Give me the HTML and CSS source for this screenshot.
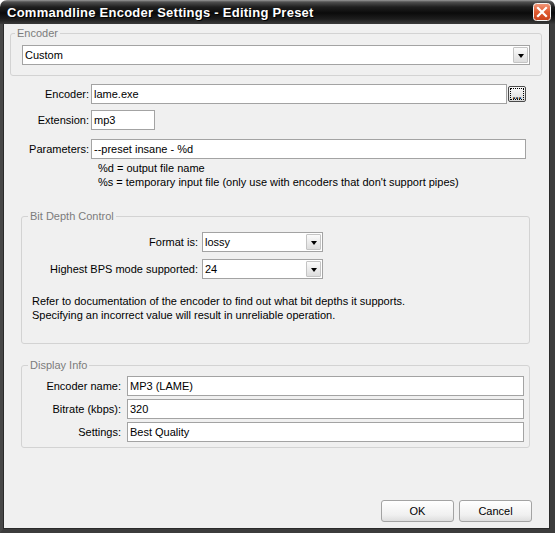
FILE: index.html
```html
<!DOCTYPE html>
<html>
<head>
<meta charset="utf-8">
<link rel="stylesheet" href="styles.css">
</head>
<body>
<div class="window">
  <div class="titlebar">
    <span class="title">Commandline Encoder Settings - Editing Preset</span>
    <span class="close">
      <svg width="18" height="18" viewBox="0 0 18 18">
        <defs>
          <linearGradient id="cg" x1="0" y1="0" x2="0" y2="1">
            <stop offset="0" stop-color="#f39a7c"/>
            <stop offset="0.5" stop-color="#e05a30"/>
            <stop offset="1" stop-color="#c9421c"/>
          </linearGradient>
        </defs>
        <rect x="0.5" y="0.5" width="17" height="17" rx="3" fill="url(#cg)" stroke="#f4f4f4"/>
        <path d="M5 5 L13 13 M13 5 L5 13" stroke="#fff" stroke-width="2.2" stroke-linecap="square"/>
      </svg>
    </span>
  </div>
  <div class="client">
    <fieldset class="group group-encoder">
      <legend>Encoder</legend>
      <div class="combo"><span class="value">Custom</span><span class="arrow"></span></div>
    </fieldset>

    <div class="form">
      <div class="row">
        <span class="label">Encoder:</span>
        <div class="field grow">lame.exe</div>
        <div class="browse"><span>...</span></div>
      </div>
      <div class="row row-ext">
        <span class="label">Extension:</span>
        <div class="field ext">mp3</div>
      </div>
      <div class="row row-params">
        <span class="label">Parameters:</span>
        <div class="field grow">--preset insane - %d</div>
      </div>
      <div class="hints">
        <div>%d = output file name</div>
        <div>%s = temporary input file (only use with encoders that don't support pipes)</div>
      </div>
    </div>

    <fieldset class="group group-bit">
      <legend>Bit Depth Control</legend>
      <div class="brow">
        <span class="label">Format is:</span>
        <div class="combo small"><span class="value">lossy</span><span class="arrow"></span></div>
      </div>
      <div class="brow brow-2">
        <span class="label">Highest BPS mode supported:</span>
        <div class="combo small"><span class="value">24</span><span class="arrow"></span></div>
      </div>
      <div class="note">
        <div>Refer to documentation of the encoder to find out what bit depths it supports.</div>
        <div>Specifying an incorrect value will result in unreliable operation.</div>
      </div>
    </fieldset>

    <fieldset class="group group-display">
      <legend>Display Info</legend>
      <div class="drow">
        <span class="label">Encoder name:</span>
        <div class="field grow">MP3 (LAME)</div>
      </div>
      <div class="drow">
        <span class="label">Bitrate (kbps):</span>
        <div class="field grow">320</div>
      </div>
      <div class="drow">
        <span class="label">Settings:</span>
        <div class="field grow">Best Quality</div>
      </div>
    </fieldset>

    <div class="buttons">
      <button class="btn">OK</button>
      <button class="btn">Cancel</button>
    </div>
  </div>
</div>
</body>
</html>
```
FILE: styles.css
```css
* { box-sizing: border-box; }

body {
  margin: 0;
  background: #ffffff;
  font: 11px "Liberation Sans", Arial, sans-serif;
  color: #000;
}

.window {
  width: 555px;
  height: 533px;
  display: flex;
  flex-direction: column;
}

.titlebar {
  height: 24px;
  flex: none;
  display: flex;
  align-items: center;
  justify-content: space-between;
  padding: 0 4px 0 7px;
  border-radius: 7px 7px 0 0;
  background: linear-gradient(#9a9a9a 0px, #505050 2px, #1f1f1f 7px, #0b0b0b 13px, #1d1d1d 19px, #3a3a3a 24px);
}

.title {
  color: #fff;
  font: bold 13px "Liberation Sans", Arial, sans-serif;
  letter-spacing: 0.25px;
  text-shadow: 1px 1px 0 #000;
  padding-top: 1px;
}

.close {
  display: flex;
  width: 18px;
  height: 18px;
}

.client {
  flex: 1;
  display: flex;
  flex-direction: column;
  background: #f0f0f0;
  border-left: 3px solid #474747;
  border-right: 5px solid #3c3c3c;
  border-bottom: 4px solid #3c3c3c;
  box-shadow: inset 1px 0 0 #2a2a2a, inset -1px 0 0 #2a2a2a, inset 0 -1px 0 #2a2a2a;
}

.group {
  margin: 0;
  border: 1px solid #d3d3d3;
  border-radius: 3px;
  min-width: 0;
}

.group legend {
  padding: 0 2px;
  color: #7c7c7c;
  line-height: 13px;
}

.group-encoder {
  margin: 3px 8px 0 7px;
  padding: 5px 11px 10px 11px;
}
.group-encoder legend { margin-left: -7px; }

.combo {
  display: flex;
  align-items: center;
  height: 20px;
  background: #fff;
  border: 1px solid #a3a3a3;
  padding-left: 2px;
}
.combo .value { flex: 1; white-space: nowrap; }
.combo .arrow {
  width: 15px;
  height: 16px;
  margin-right: 1px;
  border: 1px solid #c4c4c4;
  border-radius: 1px;
  background: linear-gradient(#fbfbfb, #dddddd);
  display: flex;
  align-items: center;
  justify-content: center;
}
.combo .arrow::after {
  content: "";
  border-left: 3.5px solid transparent;
  border-right: 3.5px solid transparent;
  border-top: 4px solid #000;
  margin-top: 1px;
}
.combo.small { width: 121px; }

.form {
  margin: 8px 24px 0 0;
}
.row {
  display: flex;
  align-items: center;
}
.row .label {
  width: 86px;
  margin-right: 2px;
  text-align: right;
}
.row-ext { margin-top: 6px; }
.row-params { margin-top: 9px; }

.field {
  height: 20px;
  background: #fff;
  border: 1px solid #a3a3a3;
  padding: 0 2px;
  display: flex;
  align-items: center;
  white-space: nowrap;
}
.grow { flex: 1; }
.ext { width: 64px; }

.browse {
  width: 18px;
  height: 16px;
  margin-left: 1px;
  border: 1px solid #4a4a4a;
  border-radius: 2px;
  background: linear-gradient(#fafafa, #dadada);
  padding: 1px;
}
.browse span {
  display: flex;
  height: 100%;
  border: 1px dotted #000;
  align-items: flex-end;
  justify-content: center;
  font-weight: bold;
  line-height: 8px;
}

.hints {
  margin: 2px 0 0 95px;
  line-height: 14px;
}

.group-bit {
  margin: 21px 20px 0 18px;
  padding: 9px 10px 21px 10px;
}
.group-bit legend { margin-left: -4px; }
.brow {
  display: flex;
  align-items: center;
}
.brow .label {
  width: 166px;
  margin-right: 4px;
  text-align: right;
}
.brow-2 { margin-top: 7px; }
.note {
  margin-top: 15px;
  line-height: 14px;
}

.group-display {
  margin: 15px 20px 0 18px;
  padding: 4px 5px 5px 10px;
}
.group-display legend { margin-left: -4px; }
.drow {
  display: flex;
  align-items: center;
}
.drow + .drow { margin-top: 3px; }
.drow .label {
  width: 89px;
  margin-right: 6px;
  text-align: right;
}

.buttons {
  margin: auto 18px 7px 0;
  display: flex;
  justify-content: flex-end;
  gap: 5px;
}
.btn {
  width: 73px;
  height: 22px;
  border: 1px solid #a3a3a3;
  border-radius: 3px;
  background: linear-gradient(#ffffff, #f0f0f0 70%, #dedede);
  font: 11px "Liberation Sans", Arial, sans-serif;
  color: #000;
  padding: 0;
}
```
